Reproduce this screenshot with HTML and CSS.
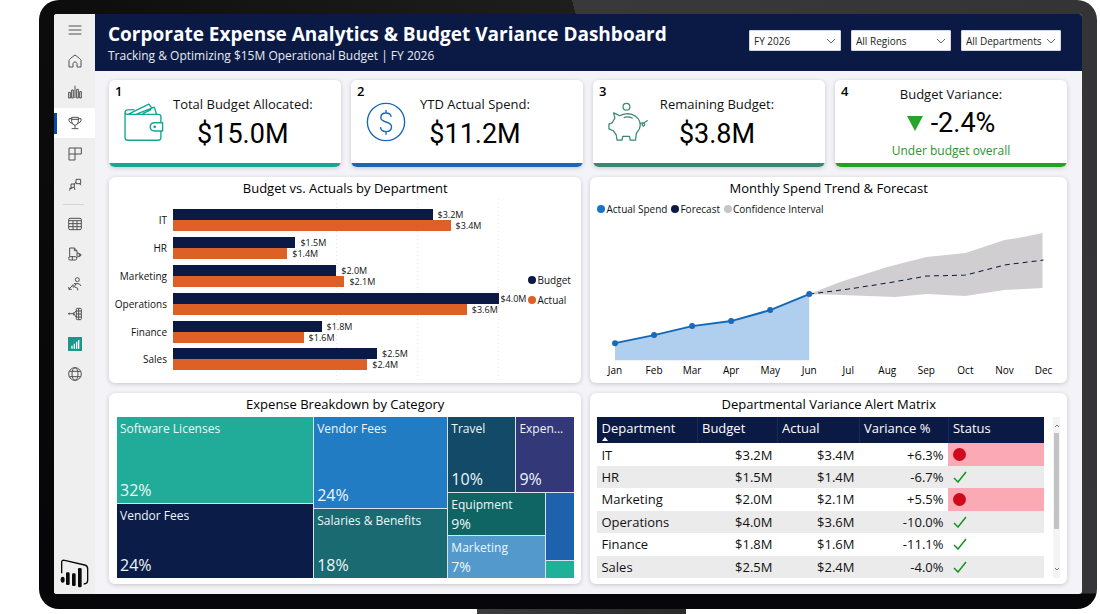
FILE: index.html
```html
<!doctype html>
<html lang="en">
<head>
    <meta charset="utf-8">
    <title>Corporate Expense Analytics &amp; Budget Variance Dashboard</title>
    <link rel="stylesheet" href="styles.css">
</head>
<body>
<div class="monitor">
    <div class="screen">

        <!-- left navigation -->
        <nav class="sidebar">
            <button class="nav-btn" aria-label="Menu">
                <svg viewBox="0 0 42 42"><path d="M2 9H40M2 21H40M2 33H40"/></svg>
            </button>
            <button class="nav-btn" aria-label="Home">
                <svg viewBox="0 0 42 42"><path d="M3 39V19Q4 15 21 3Q38 15 39 19V39H27V28Q21 19 15 28V39Z"/></svg>
            </button>
            <button class="nav-btn" aria-label="Metrics">
                <svg viewBox="0 0 42 42"><path d="M2 22H7V39H2ZM11 15H16V39H11ZM21 2V39M26 13H31V39H26ZM35 20H40V39H35Z"/></svg>
            </button>
            <button class="nav-btn active" aria-label="Goals">
                <svg viewBox="0 0 42 42"><path d="M11 4H31V17Q29 27 21 28Q13 27 11 17ZM11 8H3V14Q5 20 12 22M31 8H39V14Q37 20 30 22M11 10H31M21 28V37M11 38H31"/></svg>
            </button>
            <button class="nav-btn" aria-label="Apps">
                <svg viewBox="0 0 42 42"><path d="M3 3H21V21H3ZM21 3H40V21H21M3 21V39H21V21"/></svg>
            </button>
            <button class="nav-btn" aria-label="Deployment">
                <svg viewBox="0 0 42 42"><path d="M24 4H38V17H24ZM35 17L39 22M24 13L17 19M9 18H19V28H9ZM9 28L4 38M19 28L21 36M4 31H13"/></svg>
            </button>
            <hr class="nav-line">
            <button class="nav-btn" aria-label="Tables">
                <svg viewBox="0 0 42 42"><rect x="2" y="4" width="38" height="34" rx="4"/><path d="M2 11H40M2 20H40M2 29H40M15 11V38M27 11V38"/></svg>
            </button>
            <button class="nav-btn" aria-label="Data files">
                <svg viewBox="0 0 42 42"><path d="M5 29V3H19L27 11V29M19 3V11H27M27 18Q37 18 37 24T27 30"/><rect x="2" y="29" width="24" height="10" rx="4"/><path d="M13 29V39"/><circle cx="36" cy="24" r="3"/></svg>
            </button>
            <button class="nav-btn" aria-label="People">
                <svg viewBox="0 0 42 42"><circle cx="28" cy="8" r="6"/><path d="M18 20H30Q36 20 39 27M24 20L19 29L29 34V40M15 23L3 37M3 37L2 30M3 37H11M15 23L16 32"/></svg>
            </button>
            <button class="nav-btn" aria-label="Connections">
                <svg viewBox="0 0 42 42"><path d="M1 20H17M17 20L25 11M17 20L25 31M17 16V25M4 17L1 20L4 23"/><rect x="25" y="4" width="15" height="34" rx="3"/><path d="M25 12H40M25 21H40M25 30H40M32 4V38"/></svg>
            </button>
            <button class="nav-btn" aria-label="Report">
                <svg class="report-icon" viewBox="0 0 42 42"><rect width="42" height="42"/><path d="M12 35V26M19 35V20M26 35V14M32 35V9"/></svg>
            </button>
            <button class="nav-btn" aria-label="Browse">
                <svg viewBox="0 0 42 42"><circle cx="21" cy="21" r="19"/><ellipse cx="21" cy="21" rx="9" ry="19"/><path d="M4 13H38M4 29H38"/></svg>
            </button>
            <svg class="logo" viewBox="0 0 87 90">
                <path class="logo-line" d="M5 46V14Q5 5 14 7L74 21Q83 23 83 32V67Q83 78 71 78"/>
                <ellipse cx="8" cy="65" rx="6" ry="9"/>
                <rect x="18" y="43" width="11" height="38" rx="4"/>
                <rect x="36" y="46" width="11" height="38" rx="4"/>
                <rect x="54" y="30" width="11" height="58" rx="4"/>
            </svg>
        </nav>

        <div class="page">
            <header class="header">
                <div class="titles">
                    <h1>Corporate Expense Analytics &amp; Budget Variance Dashboard</h1>
                    <p>Tracking &amp; Optimizing $15M Operational Budget | FY 2026</p>
                </div>
                <div class="filters">
                    <select class="filter filter-year" aria-label="Fiscal year"><option>FY 2026</option></select>
                    <select class="filter" aria-label="Region"><option>All Regions</option></select>
                    <select class="filter" aria-label="Department"><option>All Departments</option></select>
                </div>
            </header>

            <main class="content">
                <!-- KPI cards -->
                <section class="kpis">
                    <div class="kpi kpi-teal">
                        <span class="kpi-num">1</span>
                        <svg class="kpi-icon" viewBox="0 0 116 116">
                            <path d="M107 60V43Q107 36 100 36H11Q3 36 3 30V103Q3 111 11 111H99Q107 111 107 103V84M3 30Q3 24 11 23L30 22M13 35L72 6L82 19M36 35L88 15L94 35M54 34L79 22"/>
                            <path d="M112 60H88Q76 60 76 72T88 84H112Z"/>
                            <circle class="dot" cx="89" cy="72" r="4"/>
                        </svg>
                        <div class="kpi-text">
                            <h2>Total Budget Allocated:</h2>
                            <strong>$15.0M</strong>
                        </div>
                    </div>
                    <div class="kpi kpi-blue">
                        <span class="kpi-num">2</span>
                        <svg class="kpi-icon" viewBox="0 0 116 116">
                            <circle cx="58" cy="58" r="54"/>
                            <path d="M73 43Q71 32 58 32Q43 32 43 45Q43 54 58 58Q74 62 74 72Q74 86 58 86Q43 86 42 73M58 23V32M58 86V95"/>
                        </svg>
                        <div class="kpi-text">
                            <h2>YTD Actual Spend:</h2>
                            <strong>$11.2M</strong>
                        </div>
                    </div>
                    <div class="kpi kpi-green">
                        <span class="kpi-num">3</span>
                        <svg class="kpi-icon" viewBox="0 0 128 128">
                            <circle cx="59" cy="15" r="11"/>
                            <path d="M18 35Q27 38 37 44Q48 38 63 37Q92 39 101 62Q108 83 91 99L88 122H71L69 110H47L45 122H29L26 104L17 92L3 86V71L13 67L22 51ZM50 50Q64 45 79 52M103 67Q113 70 127 59M112 66Q106 77 114 77Q121 74 114 66"/>
                        </svg>
                        <div class="kpi-text">
                            <h2>Remaining Budget:</h2>
                            <strong>$3.8M</strong>
                        </div>
                    </div>
                    <div class="kpi kpi-lime">
                        <span class="kpi-num">4</span>
                        <div class="kpi-text">
                            <h2>Budget Variance:</h2>
                            <strong><i class="down"></i>-2.4%</strong>
                            <p>Under budget overall</p>
                        </div>
                    </div>
                </section>

                <section class="panels">
                    <!-- bar chart -->
                    <div class="panel">
                        <h2>Budget vs. Actuals by Department</h2>
                        <div class="bars">
                            <div class="bar-names">
                                <span>IT</span><span>HR</span><span>Marketing</span><span>Operations</span><span>Finance</span><span>Sales</span>
                            </div>
                            <div class="plot">
                                <div class="pair">
                                    <div class="bar"><i style="width:79.5%"></i>$3.2M</div>
                                    <div class="bar actual"><i style="width:85%"></i>$3.4M</div>
                                </div>
                                <div class="pair">
                                    <div class="bar"><i style="width:37.5%"></i>$1.5M</div>
                                    <div class="bar actual"><i style="width:35%"></i>$1.4M</div>
                                </div>
                                <div class="pair">
                                    <div class="bar"><i style="width:50%"></i>$2.0M</div>
                                    <div class="bar actual"><i style="width:52.5%"></i>$2.1M</div>
                                </div>
                                <div class="pair">
                                    <div class="bar full"><i style="width:100%"></i>$4.0M</div>
                                    <div class="bar actual"><i style="width:90%"></i>$3.6M</div>
                                </div>
                                <div class="pair">
                                    <div class="bar"><i style="width:45.5%"></i>$1.8M</div>
                                    <div class="bar actual"><i style="width:40%"></i>$1.6M</div>
                                </div>
                                <div class="pair">
                                    <div class="bar"><i style="width:62.5%"></i>$2.5M</div>
                                    <div class="bar actual"><i style="width:59.5%"></i>$2.4M</div>
                                </div>
                            </div>
                            <ul class="legend legend-side">
                                <li class="navy">Budget</li>
                                <li class="orange">Actual</li>
                            </ul>
                        </div>
                    </div>

                    <!-- trend chart -->
                    <div class="panel">
                        <h2>Monthly Spend Trend &amp; Forecast</h2>
                        <ul class="legend">
                            <li class="blue">Actual Spend</li>
                            <li class="navy">Forecast</li>
                            <li class="grey">Confidence Interval</li>
                        </ul>
                        <svg class="trend" viewBox="0 0 476 163">
                            <path class="band" d="M219 74L250 62L297 47L336 37L375 33L414 20L433 17L452 13V68L414 70L375 76L336 74L305 77L250 75Z"/>
                            <path class="area" d="M25 123L64 115L102 106L141 101L180 90L219 74V140H25Z"/>
                            <path class="forecast" d="M219 74L258 69L297 63L336 56L375 55L414 45L453 40"/>
                            <path class="actual-line" d="M25 123L64 115L102 106L141 101L180 90L219 74"/>
                            <g class="points">
                                <circle cx="25" cy="123" r="3"/><circle cx="64" cy="115" r="3"/><circle cx="102" cy="106" r="3"/>
                                <circle cx="141" cy="101" r="3"/><circle cx="180" cy="90" r="3"/><circle cx="219" cy="74" r="3"/>
                            </g>
                            <g class="months">
                                <text x="25" y="154">Jan</text><text x="64" y="154">Feb</text><text x="102" y="154">Mar</text>
                                <text x="141" y="154">Apr</text><text x="180" y="154">May</text><text x="219" y="154">Jun</text>
                                <text x="258" y="154">Jul</text><text x="297" y="154">Aug</text><text x="336" y="154">Sep</text>
                                <text x="375" y="154">Oct</text><text x="414" y="154">Nov</text><text x="453" y="154">Dec</text>
                            </g>
                        </svg>
                    </div>

                    <!-- treemap -->
                    <div class="panel">
                        <h2>Expense Breakdown by Category</h2>
                        <div class="treemap">
                            <div class="tree-col tree-col-a">
                                <div class="tile software"><span>Software Licenses</span><b>32%</b></div>
                                <div class="tile vendor"><span>Vendor Fees</span><b>24%</b></div>
                            </div>
                            <div class="tree-col tree-col-b">
                                <div class="tile vendor-blue"><span>Vendor Fees</span><b>24%</b></div>
                                <div class="tile salaries"><span>Salaries &amp; Benefits</span><b>18%</b></div>
                            </div>
                            <div class="tree-col tree-col-c">
                                <div class="tree-top">
                                    <div class="tile travel"><span>Travel</span><b>10%</b></div>
                                    <div class="tile expen"><span>Expen...</span><b>9%</b></div>
                                </div>
                                <div class="tree-bottom">
                                    <div class="tile small equipment"><span>Equipment</span><b>9%</b></div>
                                    <div class="tile small marketing"><span>Marketing</span><b>7%</b></div>
                                    <div class="tree-rest">
                                        <div class="tile rest-blue"></div>
                                        <div class="tile rest-green"></div>
                                    </div>
                                </div>
                            </div>
                        </div>
                    </div>

                    <!-- variance table -->
                    <div class="panel">
                        <h2>Departmental Variance Alert Matrix</h2>
                        <div class="matrix">
                            <table>
                                <thead>
                                    <tr>
                                        <th class="col-dept sorted">Department</th>
                                        <th class="col-budget">Budget</th>
                                        <th class="col-actual">Actual</th>
                                        <th class="col-var">Variance %</th>
                                        <th>Status</th>
                                    </tr>
                                </thead>
                                <tbody>
                                    <tr><td>IT</td><td>$3.2M</td><td>$3.4M</td><td>+6.3%</td><td class="alert"><i class="bad"></i></td></tr>
                                    <tr><td>HR</td><td>$1.5M</td><td>$1.4M</td><td>-6.7%</td><td><svg class="ok" viewBox="0 0 14 12"><path d="M1 7L5 11L13 1"/></svg></td></tr>
                                    <tr><td>Marketing</td><td>$2.0M</td><td>$2.1M</td><td>+5.5%</td><td class="alert"><i class="bad"></i></td></tr>
                                    <tr><td>Operations</td><td>$4.0M</td><td>$3.6M</td><td>-10.0%</td><td><svg class="ok" viewBox="0 0 14 12"><path d="M1 7L5 11L13 1"/></svg></td></tr>
                                    <tr><td>Finance</td><td>$1.8M</td><td>$1.6M</td><td>-11.1%</td><td><svg class="ok" viewBox="0 0 14 12"><path d="M1 7L5 11L13 1"/></svg></td></tr>
                                    <tr><td>Sales</td><td>$2.5M</td><td>$2.4M</td><td>-4.0%</td><td><svg class="ok" viewBox="0 0 14 12"><path d="M1 7L5 11L13 1"/></svg></td></tr>
                                </tbody>
                            </table>
                            <div class="scroll">
                                <svg viewBox="0 0 6 4"><path d="M1 3L3 1L5 3"/></svg>
                                <div class="scroll-track"><div class="thumb"></div></div>
                                <svg viewBox="0 0 6 4"><path d="M1 1L3 3L5 1"/></svg>
                            </div>
                        </div>
                    </div>
                </section>
            </main>
        </div>
    </div>
</div>
<div class="stand"></div>
</body>
</html>
```
FILE: styles.css
```css
* {
    box-sizing: border-box;
    margin: 0;
    padding: 0;
}

body {
    display: flex;
    flex-direction: column;
    min-height: 100vh;
    padding: 0 3px 0 39px;
    background: #fff;
    font-family: "Open Sans", "Noto Sans", sans-serif;
    color: #111;
}

h1, h2, strong, b, i {
    font-weight: 400;
    font-style: normal;
}

ul {
    list-style: none;
}

/* monitor */
.monitor {
    flex: 1;
    display: flex;
    padding: 14px 15px 15px;
    border-radius: 20px;
    background:
        linear-gradient(to top, #070709 15px, transparent 16px),
        linear-gradient(75deg, #050507 0, #151414 30%, #1f1e1f 57%, #39383a 57%, #343335 100%);
}

.stand {
    width: 209px;
    height: 5px;
    margin: 0 auto;
    position: relative;
    left: 13px;
    background: linear-gradient(to right, #3c3b3d, #2a2a2b);
}

.screen {
    flex: 1;
    display: flex;
    min-width: 0;
    border-radius: 3px;
    overflow: hidden;
    background: #f4f3f7;
}

/* sidebar */
.sidebar {
    width: 41px;
    flex: none;
    display: flex;
    flex-direction: column;
    align-items: stretch;
    padding: 1px 0 6px;
    background: #f0efef;
}

.nav-btn {
    height: 30px;
    margin-bottom: 1px;
    display: flex;
    align-items: center;
    justify-content: center;
    border: 0;
    border-left: 3px solid transparent;
    padding-right: 3px;
    background: none;
    cursor: pointer;
}

.nav-line ~ .nav-btn {
    margin-bottom: 0;
}

.nav-btn.active {
    background: linear-gradient(#0f47a8, #0f47a8) 0 50% / 3px 21px no-repeat #fff;
    background-origin: border-box;
}

.nav-btn svg {
    width: 14px;
    height: 14px;
    fill: none;
    stroke: #505050;
    stroke-width: 3;
}

.nav-btn .report-icon {
    fill: #17988a;
    stroke: #fff;
    stroke-width: 4;
}

.report-icon rect {
    stroke: none;
}

.nav-line {
    height: 1px;
    margin: 3px 11px 4px 9px;
    border: 0;
    background: #d4d3d4;
}

.logo {
    width: 29px;
    height: 30px;
    margin: auto 0 0 6px;
    fill: #0a0a0a;
}

.logo-line {
    fill: none;
    stroke: #0a0a0a;
    stroke-width: 4;
}

/* header */
.page {
    flex: 1;
    min-width: 0;
    display: flex;
    flex-direction: column;
}

.header {
    height: 57px;
    flex: none;
    display: flex;
    align-items: center;
    justify-content: space-between;
    padding: 0 21px 0 13px;
    background: #0b1a45;
    color: #fff;
}

.header h1 {
    font-size: 19px;
    line-height: 26px;
    font-weight: 700;
}

.header p {
    font-size: 12px;
    line-height: 18px;
    color: #e8eaf2;
}

.filters {
    display: flex;
    gap: 10px;
    margin-bottom: 4px;
}

.filter {
    width: 100px;
    height: 21px;
    padding: 0 18px 0 4px;
    border: 1px solid #d5d8e2;
    border-radius: 1px;
    appearance: none;
    background: #fff url("data:image/svg+xml,%3Csvg xmlns='http://www.w3.org/2000/svg' width='10' height='6'%3E%3Cpath d='M1 1l4 4 4-4' fill='none' stroke='%23666'/%3E%3C/svg%3E") no-repeat right 4px center;
    font: 10px "Open Sans", "Noto Sans", sans-serif;
    color: #222;
}

.filter-year {
    width: 92px;
}

/* cards */
.content {
    flex: 1;
    display: flex;
    flex-direction: column;
    gap: 10px;
    padding: 9px 15px 10px 14px;
}

.kpis {
    display: grid;
    grid-template-columns: repeat(4, 1fr);
    gap: 10px;
}

.kpi, .panel {
    background: #fff;
    border-radius: 6px;
    box-shadow: 0 1px 4px rgba(40, 35, 60, 0.22);
}

.kpi {
    height: 87px;
    display: flex;
    align-items: center;
    gap: 8px;
    padding: 0 14px 3px;
    position: relative;
    overflow: hidden;
    --accent: #14a796;
    background: linear-gradient(to top, var(--accent) 4px, #fff 4px);
}

.kpi-blue {
    --accent: #1769b8;
}

.kpi-green {
    --accent: #398873;
}

.kpi-lime {
    --accent: #21a127;
    justify-content: center;
}

.kpi-num {
    position: absolute;
    left: 6px;
    top: 2px;
    font-size: 13px;
    line-height: 18px;
    font-weight: 600;
    color: #000;
}

.kpi-icon {
    width: 42px;
    height: 42px;
    padding: 1px;
    fill: none;
    stroke: var(--accent);
    stroke-width: 4;
    stroke-linejoin: round;
}

.kpi-icon .dot {
    fill: var(--accent);
    stroke: none;
}

.kpi-text {
    min-width: 120px;
    padding-top: 4px;
    text-align: center;
}

.kpi h2 {
    font-size: 13px;
    line-height: 20px;
}

.kpi strong {
    display: flex;
    align-items: center;
    justify-content: center;
    gap: 8px;
    font-family: Roboto, sans-serif;
    font-size: 27px;
    line-height: 40px;
    color: #000;
}

.kpi-lime .kpi-text {
    padding-top: 0;
}

.kpi-lime strong {
    line-height: 38px;
}

.kpi p {
    font-size: 12px;
    line-height: 18px;
    color: #2a932d;
}

.down {
    border: 8px solid transparent;
    border-top: 15px solid #25a52b;
    border-bottom: 0;
}

/* panels */
.panels {
    flex: 1;
    display: grid;
    grid-template-columns: 472fr 476fr;
    grid-template-rows: 208fr 192fr;
    gap: 10px 9px;
}

.panel {
    min-width: 0;
    display: flex;
    flex-direction: column;
}

.panel h2 {
    font-size: 13px;
    line-height: 22px;
    text-align: center;
    color: #000;
}

.bars {
    flex: 1;
    display: grid;
    grid-template-columns: 58px 1fr 76px;
    gap: 6px;
    padding: 0 0 3px;
}

.bar-names {
    display: grid;
    align-content: stretch;
    padding: 7px 0;
    font-size: 10px;
    text-align: right;
}

.bar-names span {
    align-self: center;
    line-height: 20px;
}

.plot {
    --dots: repeating-linear-gradient(#e8e8eb 0 1px, transparent 1px 4px);
    display: grid;
    padding: 7px 0;
    background: var(--dots) 50% 0 / 1px 100% no-repeat, var(--dots) 75% 0 / 1px 100% no-repeat, var(--dots) 100% 0 / 1px 100% no-repeat;
}

.pair {
    align-self: center;
}

.bar {
    display: flex;
    align-items: center;
    gap: 5px;
    height: 11px;
    font-size: 9px;
    line-height: 11px;
}

.bar.full {
    gap: 1px;
}

.bar i {
    flex: none;
    height: 100%;
    background: #0b1a45;
}

.bar.actual i {
    background: #dd6126;
}

.legend {
    display: flex;
    gap: 4px;
    padding-left: 7px;
    font-size: 10px;
    line-height: 20px;
}

.legend-side {
    flex-direction: column;
    align-self: center;
    gap: 0;
    padding: 0 0 0 23px;
}

.legend li {
    display: flex;
    align-items: center;
    gap: 1px;
    white-space: nowrap;
}

.legend li::before {
    content: "";
    width: 8px;
    height: 8px;
    border-radius: 50%;
    background: currentColor;
}

.legend .blue::before {
    background: #1476cf;
}

.legend .navy::before {
    background: #0b1a45;
}

.legend .orange::before {
    background: #dd6126;
}

.legend .grey::before {
    background: #c5c4c6;
}

.trend {
    display: block;
    width: 100%;
    margin-top: auto;
}

.band {
    fill: #d0ced1;
}

.area {
    fill: #b0ceee;
}

.forecast {
    fill: none;
    stroke: #111a38;
    stroke-width: 1;
    stroke-dasharray: 5 4;
}

.actual-line {
    fill: none;
    stroke: #1668b6;
    stroke-width: 2;
}

.points {
    fill: #1769bd;
}

.months {
    font-size: 10px;
    text-anchor: middle;
}

/* treemap */
.treemap {
    flex: 1;
    display: grid;
    grid-template-columns: 196fr 133fr 126fr;
    gap: 1px;
    margin: 2px 7px 6px 8px;
    background: #d5e4ea;
}

.tree-col {
    display: grid;
    gap: 1px;
}

.tree-col-a {
    grid-template-rows: 86fr 74fr;
}

.tree-col-b {
    grid-template-rows: 91fr 69fr;
}

.tree-col-c {
    grid-template-rows: 75fr 86fr;
}

.tree-top {
    display: grid;
    grid-template-columns: 67fr 58fr;
    gap: 1px;
}

.tree-bottom {
    display: grid;
    grid-template-columns: 97fr 28fr;
    grid-template-rows: 1fr 1fr;
    gap: 1px;
}

.tree-rest {
    grid-column: 2;
    grid-row: 1 / 3;
    display: grid;
    grid-template-rows: 68fr 17fr;
    gap: 1px;
}

.tile {
    min-width: 0;
    min-height: 0;
    display: flex;
    flex-direction: column;
    justify-content: space-between;
    padding: 2px 3px;
    font-size: 12px;
    line-height: 20px;
    color: #eef6f8;
}

.tile b {
    font-size: 16px;
    line-height: 22px;
}

.tile.small {
    padding: 2px 3px;
}

.tile.small b {
    font-size: 14px;
    line-height: 18px;
}

.software { background: #20ac98; }
.vendor { background: #0c1c48; }
.vendor-blue { background: #217cc4; }
.salaries { background: #1a6a72; }
.travel { background: #124a68; }
.expen { background: #333878; }
.equipment { background: #0f6563; }
.marketing { background: #5499cc; }
.rest-blue { background: #1e62ae; }
.rest-green { background: #20b098; }

/* matrix */
.matrix {
    flex: 1;
    display: flex;
    gap: 9px;
    margin: 2px 7px 6px;
}

table {
    flex: 1;
    border-collapse: collapse;
    table-layout: fixed;
    font-size: 13px;
}

th {
    height: 26px;
    padding: 0 4px 4px;
    background: #0b1a45;
    color: #fff;
    font-weight: 400;
    line-height: 20px;
    text-align: left;
    border-right: 1px solid #1a2a57;
}

th:last-child {
    border-right: 0;
}

.col-dept { width: 100px; }
.col-budget { width: 80px; }
.col-actual { width: 82px; }
.col-var { width: 89px; }

.sorted {
    position: relative;
}

.sorted::after {
    content: "";
    position: absolute;
    left: 5px;
    bottom: 2px;
    border: 3px solid transparent;
    border-top: 0;
    border-bottom: 4px solid #fff;
}

td {
    padding: 0 5px;
    line-height: 20px;
    text-align: right;
}

td:first-child, td:last-child {
    padding-left: 4px;
    text-align: left;
}

tbody tr:nth-child(even) {
    background: #ecebec;
}

td.alert {
    background: #fba9b4;
}

.bad {
    display: block;
    width: 13px;
    height: 13px;
    border-radius: 50%;
    margin-left: 1px;
    background: #cf0a1c;
}

.ok {
    display: block;
    width: 14px;
    height: 12px;
    margin-left: 1px;
    fill: none;
    stroke: #13931b;
    stroke-width: 1.5;
}

.scroll {
    width: 7px;
    display: flex;
    flex-direction: column;
    align-items: center;
    padding: 7px 0;
    background: #f4f4f5;
}

.scroll svg {
    width: 6px;
    height: 4px;
    fill: none;
    stroke: #777;
}

.scroll-track {
    flex: 1;
    align-self: stretch;
    padding: 5px 1px;
}

.thumb {
    height: 74%;
    background: #c3c2c4;
}
```
